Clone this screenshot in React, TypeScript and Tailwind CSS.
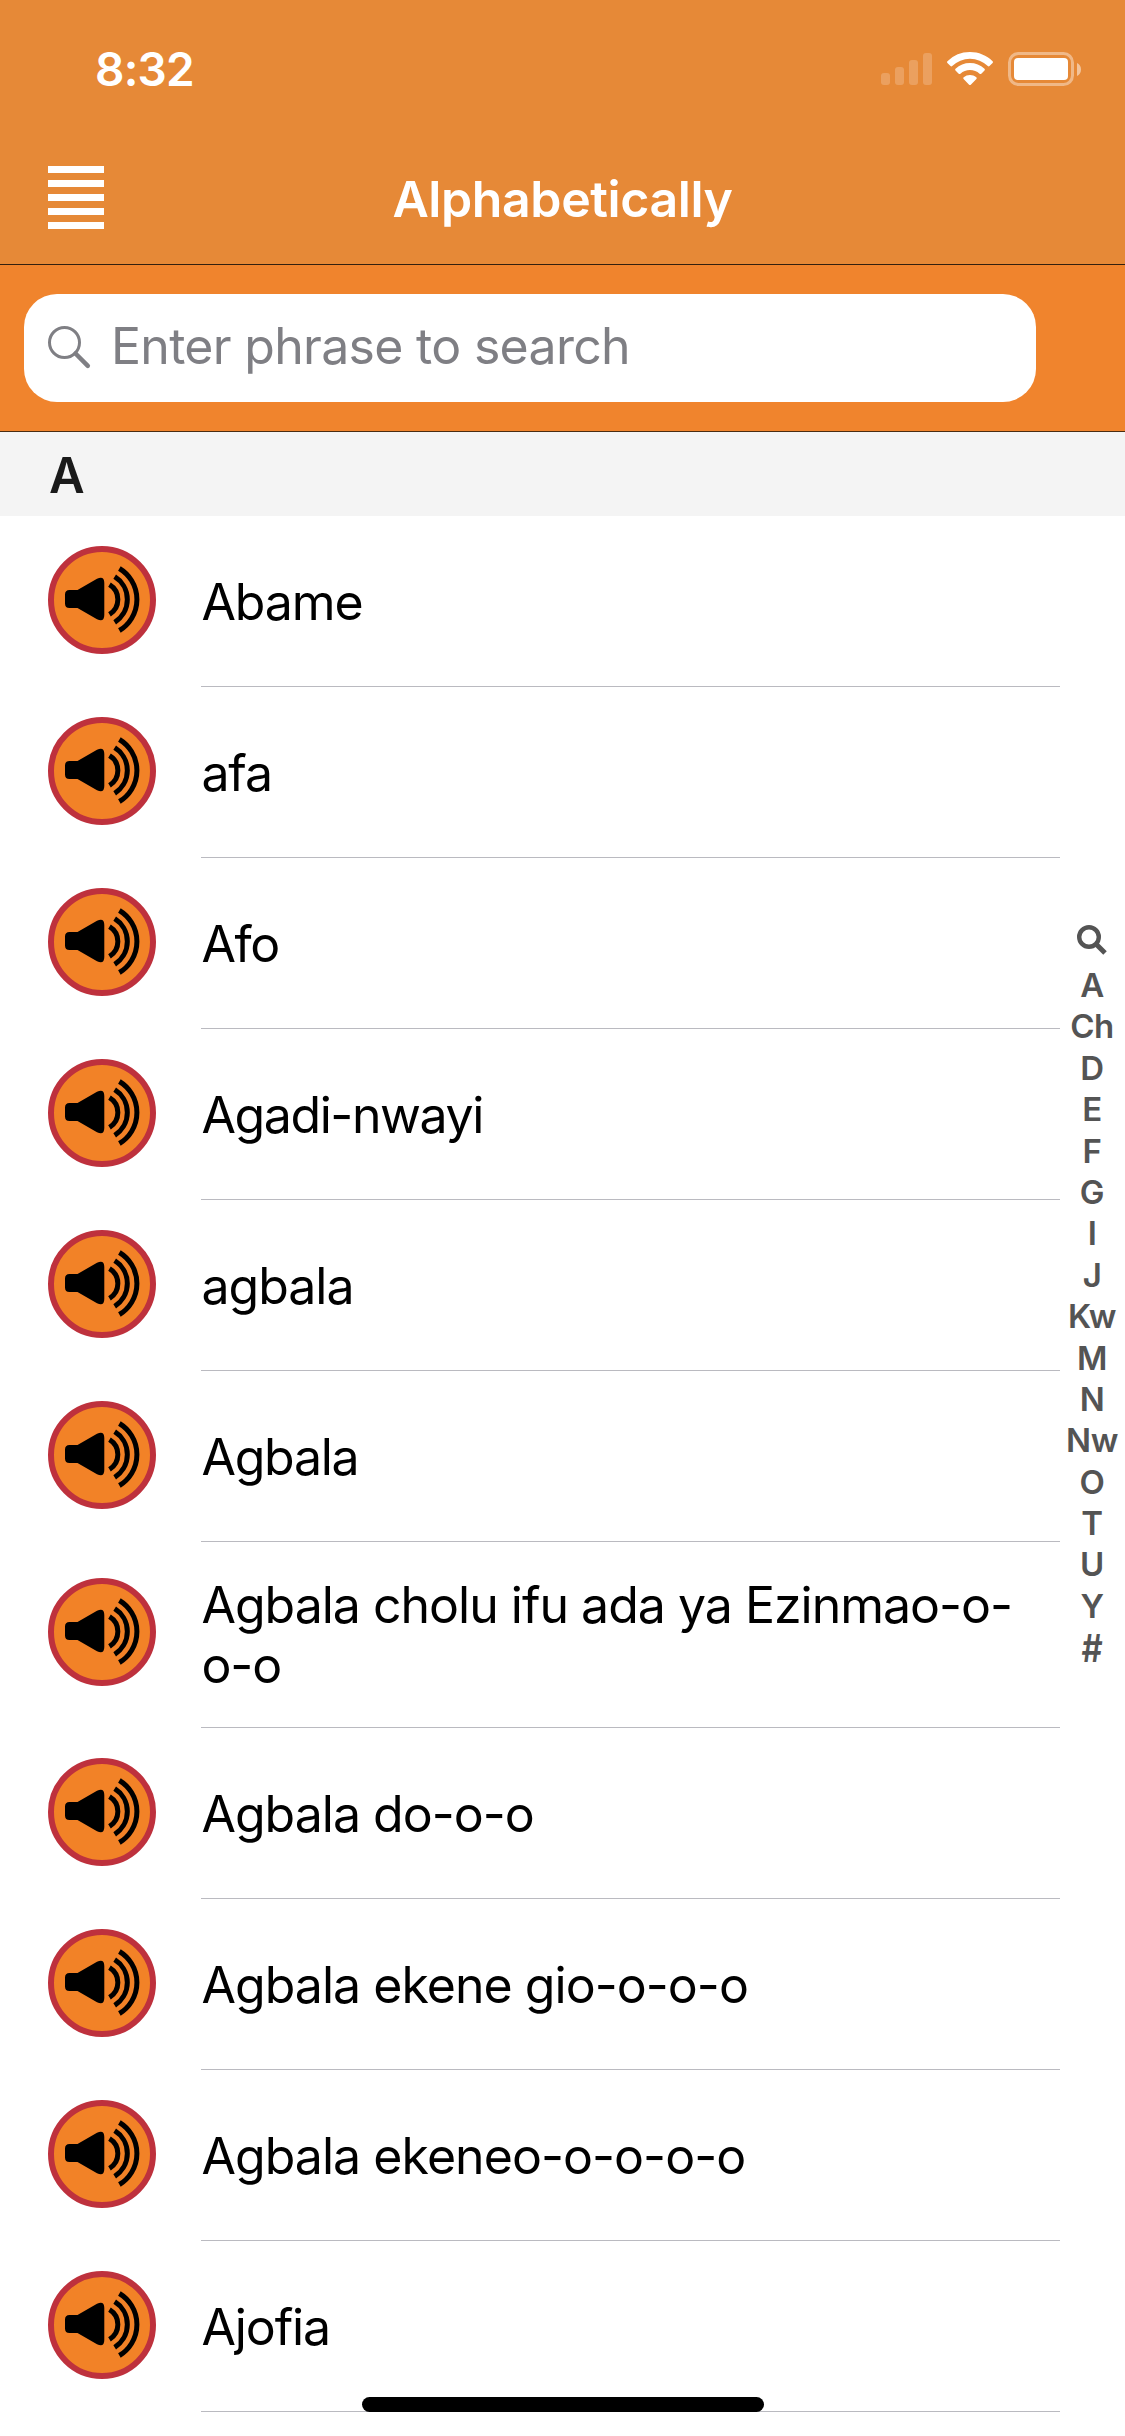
import React, { useState } from 'react';

const WORDS = [
    { text: 'Abame', spacing: 'tracking-[-1.1px]' },
    { text: 'afa', spacing: 'tracking-[-1.1px]' },
    { text: 'Afo', spacing: 'tracking-[-1.3px]' },
    { text: 'Agadi-nwayi', spacing: 'tracking-[-1.4px]' },
    { text: 'agbala', spacing: 'tracking-[-1px]' },
    { text: 'Agbala', spacing: 'tracking-[-1.25px]' },
    { text: 'Agbala cholu ifu ada ya Ezinmao-o-o-o', spacing: 'tracking-[-1px]', tall: true },
    { text: 'Agbala do-o-o', spacing: 'tracking-[-0.98px]' },
    { text: 'Agbala ekene gio-o-o-o', spacing: 'tracking-[-0.96px]' },
    { text: 'Agbala ekeneo-o-o-o-o', spacing: 'tracking-[-0.95px]' },
    { text: 'Ajofia', spacing: 'tracking-[-1.1px]' },
];

const INDEX = ['A', 'Ch', 'D', 'E', 'F', 'G', 'I', 'J', 'Kw', 'M', 'N', 'Nw', 'O', 'T', 'U', 'Y'];

const StatusIcons = () => (
    <svg width="202" height="36" viewBox="880 51 202 36" fill="#fff">
        <g opacity="0.2">
            <rect x="881" y="73" width="9" height="12" rx="3" />
            <rect x="895" y="67" width="9" height="18" rx="3" />
            <rect x="909" y="60" width="9" height="25" rx="3" />
            <rect x="923" y="53" width="9" height="32" rx="3" />
        </g>
        <path d="M970 52c8.600 0 16.600 3.300 22.600 9.200.5.500.5 1.200 0 1.700l-3.100 3.200c-.5.500-1.200.5-1.700 0a25.500 25.500 0 0 0-35.600 0c-.5.500-1.200.5-1.700 0l-3.100-3.200c-.5-.5-.5-1.200 0-1.700A32 32 0 0 1 970 52z" />
        <path d="M970 63c5.400 0 10.500 2 14.500 5.700.5.500.5 1.200 0 1.700l-3.200 3.300c-.5.500-1.200.5-1.700 0a14.200 14.200 0 0 0-19.200 0c-.5.500-1.200.5-1.700 0l-3.200-3.300c-.5-.5-.5-1.200 0-1.700A21.200 21.200 0 0 1 970 63z" />
        <path d="M970 75c2.300 0 4.500.8 6.300 2.200.6.500.6 1.200.1 1.700l-5.600 5.800c-.5.500-1.200.5-1.700 0l-5.500-5.800c-.5-.5-.5-1.200.1-1.700a10 10 0 0 1 6.300-2.200z" />
        <rect x="1009.500" y="53.500" width="63" height="31" rx="9" fill="none" stroke="#fff" strokeWidth="3" opacity="0.4" />
        <rect x="1014" y="58" width="54" height="22" rx="4" />
        <path d="M1077 63c2.400 1 4 3.500 4 6.500s-1.600 5.500-4 6.500z" opacity="0.5" />
    </svg>
);

const SpeakerIcon = () => (
    <svg width="108" height="108" viewBox="0 0 108 108" className="block shrink-0">
        <circle cx="54" cy="54" r="51" fill="#f28227" stroke="#be313d" strokeWidth="6" />
        <path d="M21.500 44h8L49 32.800q7.300-3.300 7.300 4.200v32q0 7.500-7.300 4.200L29.500 62h-8q-4.500 0-4.500-4.500v-9q0-4.500 4.500-4.500z" />
        <g fill="none" stroke="#000" strokeWidth="5">
            <path d="M61.500 38.700a17.300 17.300 0 0 1 0 29.600" />
            <path d="M66.700 30.700a26.900 26.900 0 0 1 0 45.600" />
            <path d="M71.400 22.500a36.200 36.200 0 0 1 0 62" />
        </g>
    </svg>
);

const App = () => {
    const [search, setSearch] = useState('');

    return (
        <div className="relative h-[2436px] w-[1125px] overflow-hidden bg-white font-[Inter,sans-serif]">
            {/* Header */}
            <header className="h-[265px] border-b border-[#33200f] bg-[#e68937] text-white">
                <div className="flex h-[137px] items-start justify-between pl-[95px] pr-[43px] pt-[51px]">
                    <span className="text-[46px] font-[560] leading-9 tracking-[-0.8px]">8:32</span>
                    <StatusIcons />
                </div>
                <div className="grid grid-cols-[1fr_auto_1fr] items-start pl-12 pr-12">
                    <button className="mt-[29px] flex w-14 flex-col gap-[7px]">
                        <span className="h-[7px] w-full bg-white" />
                        <span className="h-[7px] w-full bg-white" />
                        <span className="h-[7px] w-full bg-white" />
                        <span className="h-[7px] w-full bg-white" />
                        <span className="h-[7px] w-full bg-white" />
                    </button>
                    <h1 className="mt-8 text-[50px] font-[560] leading-[60px] tracking-[-0.4px]">Alphabetically</h1>
                </div>
            </header>

            {/* Search */}
            <div className="h-[167px] border-b border-[#4a2c12] bg-[#f0842d] pl-6 pt-[29px]">
                <div className="flex h-[108px] w-[1012px] items-center rounded-[33px] bg-white pl-6">
                    <svg width="44" height="44" viewBox="0 0 44 44" fill="none" stroke="#7f7f84" className="shrink-0">
                        <circle cx="16.500" cy="16.500" r="15" strokeWidth="3" />
                        <path d="M27.500 27.500 39.800 39.800" strokeWidth="4.500" strokeLinecap="round" />
                    </svg>
                    <input
                        type="text"
                        value={search}
                        placeholder="Enter phrase to search"
                        className="mb-[3px] ml-[19px] h-[60px] w-[880px] text-[50px] tracking-[-0.7px] placeholder:text-[#7f7f84] focus:outline-none"
                        onChange={(e) => setSearch(e.target.value)}
                    />
                </div>
            </div>

            {/* Section title */}
            <h2 className="h-[84px] bg-[#f4f4f4] pl-[49px] pt-[14px] text-[49px] font-[560] leading-[60px] text-[#1a1a1a]">A</h2>

            {/* Words */}
            <ul>
                {WORDS.map((word) => (
                    <li key={word.text} className={word.tall ? 'flex h-[186px] pl-12' : 'flex h-[171px] pl-12'}>
                        <div className={word.tall ? 'pt-9' : 'pt-[30px]'}>
                            <SpeakerIcon />
                        </div>
                        <div
                            className={`ml-[45px] w-[859px] border-b border-[#babac0] pl-[0.4px] pr-8 text-[50px] leading-[60px] text-black ${word.spacing} ${word.tall ? 'pt-[33px]' : 'pt-14'}`}
                        >
                            {word.text}
                        </div>
                    </li>
                ))}
            </ul>

            {/* Index, floats over the list */}
            <nav className="absolute right-0 top-[925px] flex w-[66px] flex-col items-center text-[33px] font-[560] tracking-[-0.4px] text-[#545454]">
                <svg width="30" height="30" viewBox="0 0 30 30" fill="none" stroke="#545454" className="mb-[10px]">
                    <circle cx="12" cy="12" r="9.800" strokeWidth="4.400" />
                    <path d="M18.500 18.500 28 28" strokeWidth="5" />
                </svg>
                {INDEX.map((letter) => (
                    <span key={letter} className="h-[41.400px] leading-[41px]">{letter}</span>
                ))}
                <span className="mt-px scale-y-[1.17] leading-[41px]">#</span>
            </nav>

            {/* Home indicator */}
            <div className="absolute left-[362px] top-[2397px] h-[15px] w-[402px] rounded-full bg-black" />
        </div>
    );
};

export default App;
